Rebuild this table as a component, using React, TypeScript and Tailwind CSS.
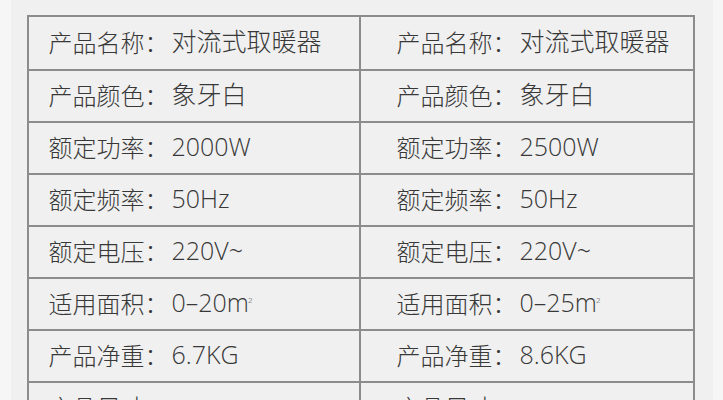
import React from "react";

const sup = <span className="text-[8px] relative -top-[9px] -ml-[1px]">2</span>;

const rows: [string, React.ReactNode, React.ReactNode][] = [
  ["产品名称：", "对流式取暖器", "对流式取暖器"],
  ["产品颜色：", "象牙白", "象牙白"],
  ["额定功率：", "2000W", "2500W"],
  ["额定频率：", "50Hz", "50Hz"],
  ["额定电压：", "220V~", "220V~"],
  ["适用面积：", <>0–20m{sup}</>, <>0–25m{sup}</>],
  ["产品净重：", "6.7KG", "8.6KG"],
  ["产品尺寸：", "", ""],
];

const valueFont = { fontFamily: '"Open Sans", "Noto Sans CJK SC", sans-serif', fontWeight: 300 };

export default function App() {
  return (
    <div className="w-[723px] h-[400px] overflow-hidden bg-[#f6f6f6] flex justify-center">
      <div className="w-[702px] h-full bg-[#f0f0f0] pt-[15px] pl-[16px]">
        <div
          className="w-[668px] border-t-2 border-l-2 border-r-2 border-[#8c8c8c] text-[#383838] text-[24px] font-light leading-none"
          style={{ fontFamily: '"Noto Sans CJK SC", "Noto Sans", sans-serif' }}
        >
          {rows.map(([label, a, b], i) => (
            <div
              key={i}
              className={`grid grid-cols-[332px_1fr] border-b-2 border-[#8c8c8c] ${i === 0 ? "h-[54px]" : "h-[52px]"}`}
            >
              <div className="border-r-2 border-[#8c8c8c] flex items-center pl-[20px] pb-[3px] whitespace-nowrap">
                <span>{label}</span>
                <span className="ml-[3px] text-[25px]" style={valueFont}>{a}</span>
              </div>
              <div className="flex items-center pl-[36px] pb-[3px] whitespace-nowrap">
                <span>{label}</span>
                <span className="ml-[3px] text-[25px]" style={valueFont}>{b}</span>
              </div>
            </div>
          ))}
        </div>
      </div>
    </div>
  );
}
